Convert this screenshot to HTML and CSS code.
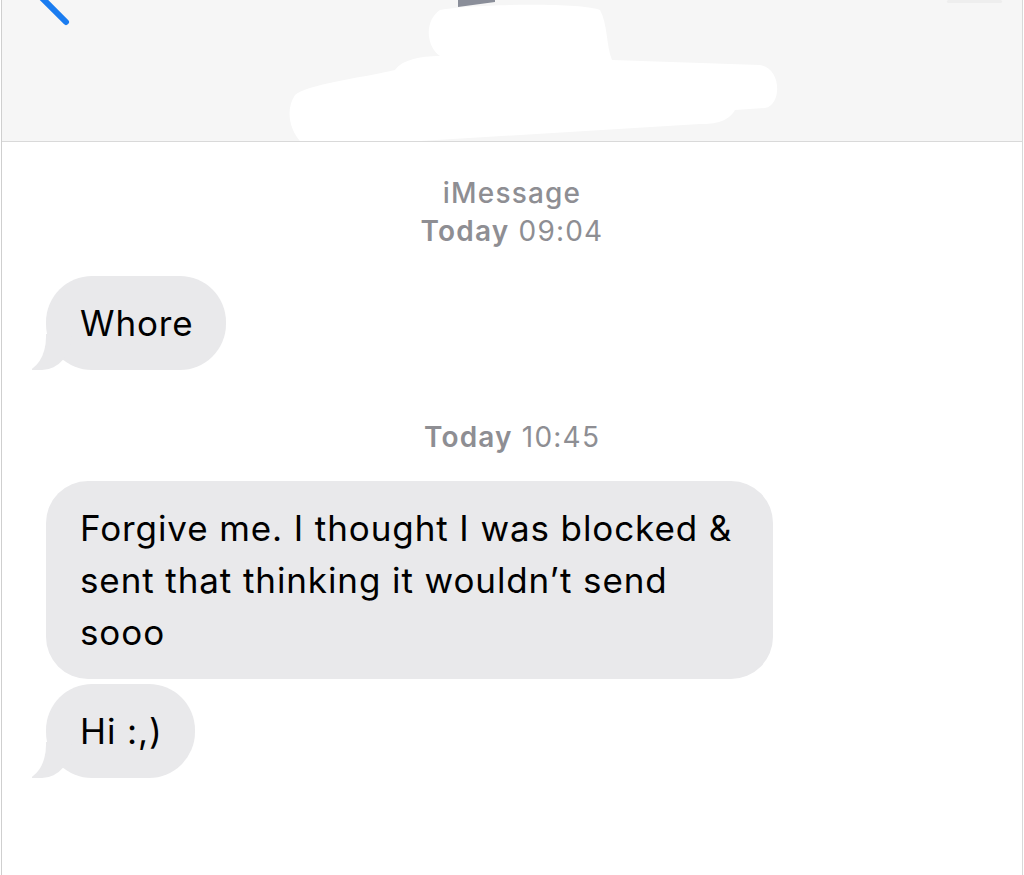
FILE: index.html
```html
<!DOCTYPE html>
<html>
<head>
<meta charset="utf-8">
<link rel="stylesheet" href="styles.css">
</head>
<body>
<div class="frame">
  <header class="nav">
    <svg class="nav-art" width="1020" height="141" viewBox="0 0 1020 141">
      <line x1="38" y1="-4" x2="64" y2="22" stroke="#1a7cf0" stroke-width="6" stroke-linecap="round"/>
      <polygon points="456,0 493,0 493,2 456,7" fill="#8a8e99"/>
      <rect x="945" y="0" width="55" height="3" rx="1.5" fill="#eeeeee"/>
      <path fill="#ffffff" d="M 438 10 C 470 4, 580 2, 598 10 C 606 25, 604 45, 610 60 L 758 65 C 780 68, 780 105, 763 108 L 733 110 C 726 122, 713 124, 698 124 L 418 141 L 298 141 C 288 130, 283 110, 293 95 C 303 85, 358 78, 393 70 C 400 60, 418 56, 438 56 C 423 45, 423 20, 438 10 Z"/>
    </svg>
  </header>
  <main class="thread">
    <div class="stamp">
      <div class="service">iMessage</div>
      <div><span class="day">Today</span> 09:04</div>
    </div>
    <div class="bubble tail first">Whore</div>
    <div class="stamp second">
      <div><span class="day">Today</span> 10:45</div>
    </div>
    <div class="bubble long">Forgive me. I thought I was blocked &amp; sent that thinking it wouldn’t send sooo</div>
    <div class="bubble tail grouped">Hi :,)</div>
  </main>
</div>
</body>
</html>
```

FILE: styles.css
```css
html, body {
  margin: 0;
  padding: 0;
  background: #ffffff;
}

body {
  font-family: Inter, "Liberation Sans", Arial, sans-serif;
  width: 1024px;
  height: 875px;
  overflow: hidden;
}

.frame {
  margin-left: 1px;
  width: 1020px;
  height: 875px;
  border-left: 1px solid #cfcfcf;
  border-right: 1px solid #d8d8d8;
  display: flex;
  flex-direction: column;
}

.nav {
  position: relative;
  height: 141px;
  background: #f6f6f6;
  border-bottom: 1px solid #d9d9d9;
  flex: none;
}

.nav-art {
  position: absolute;
  left: 0;
  top: 0;
}

.thread {
  display: flex;
  flex-direction: column;
  align-items: flex-start;
  padding: 32px 0 0 44px;
}

.stamp {
  align-self: center;
  margin-left: -44px;
  text-align: center;
  color: #8e8e93;
  font-size: 28px;
  letter-spacing: 1.2px;
  line-height: 38px;
}

.stamp .day {
  font-weight: 600;
}

.service {
  font-weight: 500;
}

.stamp.second {
  margin-top: 48px;
}

.bubble {
  position: relative;
  box-sizing: border-box;
  background: #e9e9eb;
  color: #000;
  font-size: 35px;
  letter-spacing: 0.9px;
  line-height: 52px;
  padding: 21px 32px 21px 34px;
  border-radius: 46px;
  max-width: 727px;
}

.bubble.first {
  margin-top: 26px;
}

.bubble.long {
  margin-top: 25px;
  border-radius: 42px;
  width: 727px;
}

.bubble.grouped {
  margin-top: 5px;
}

.bubble.tail::before {
  content: "";
  position: absolute;
  left: -14px;
  bottom: 0;
  width: 40px;
  height: 36px;
  background: #e9e9eb;
  border-bottom-right-radius: 30px 36px;
}

.bubble.tail::after {
  content: "";
  position: absolute;
  left: -34px;
  bottom: -1px;
  width: 34px;
  height: 38px;
  background: #ffffff;
  border-bottom-right-radius: 22px 34px;
}
```
